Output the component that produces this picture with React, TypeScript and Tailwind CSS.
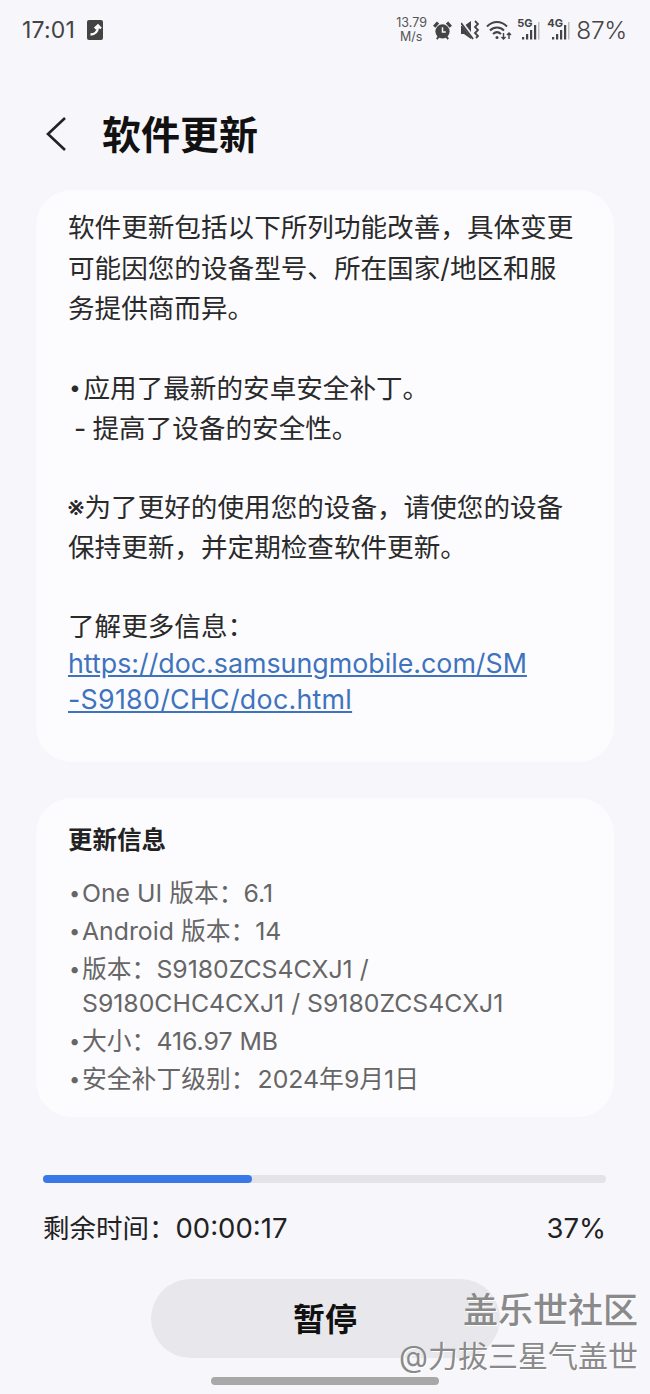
import React from "react";

const font = { fontFamily: '"Inter", "Noto Sans CJK SC", sans-serif' };

function Signal({ label }: { label: string }) {
  return (
    <div className="relative w-[23px] h-[22px]">
      <span className="absolute left-0 top-[-2px] text-[11px] leading-[12px] font-bold text-[#444]">{label}</span>
      <svg className="absolute left-0 top-0" width="23" height="22" viewBox="0 0 23 22" fill="#444">
        <rect x="5" y="18" width="2.200" height="2.500" />
        <rect x="9" y="15" width="2.200" height="5.500" />
        <rect x="13" y="11" width="2.200" height="9.500" />
        <rect x="17" y="6" width="2.200" height="14.500" />
        <rect x="21" y="3" width="1.500" height="17.500" fill="#bbb" />
      </svg>
    </div>
  );
}

function StatusBar() {
  return (
    <div className="h-[60px] pl-[22px] pr-[23px] flex items-center justify-between text-[#444]">
      <div className="flex items-center gap-[12px]">
        <span className="text-[23px] leading-none tracking-[0.2px]">17:01</span>
        <svg width="16" height="20" viewBox="0 0 16 20">
          <rect width="16" height="20" rx="2" fill="#444" />
          <path d="M3.500 14.500c4 0 7-2.500 7.500-7.500M7.800 8.500l3.200-3 3 3" fill="none" stroke="#fff" strokeWidth="2.400" />
        </svg>
      </div>
      <div className="flex items-center">
        <div className="w-[30px] text-center text-[12.500px] leading-[14px] text-[#555]">
          13.79
          <br />
          M/s
        </div>
        {/* alarm clock */}
        <svg className="ml-[7px]" width="19" height="19" viewBox="0 0 20 20" fill="#444">
          <circle cx="10" cy="11" r="7.500" />
          <path d="M0 5l4-4.500 2.500 2-4 4.500zM20 5l-4-4.500-2.500 2 4 4.500z" />
          <path d="M10 6.500v5h3.500" fill="none" stroke="#f6f6fb" strokeWidth="1.600" />
          <path d="M4 19l2-2.500M16 19l-2-2.500" stroke="#444" strokeWidth="2" />
        </svg>
        {/* muted speaker with vibration */}
        <svg className="ml-[9px]" width="18" height="20" viewBox="0 0 18 20" fill="#444">
          <path d="M0 6h3l7-5v18l-7-5H0z" />
          <path d="M0 1.500l12 16" stroke="#f6f6fb" strokeWidth="3.200" />
          <path d="M0 3l12 16" stroke="#444" strokeWidth="1.800" />
          <path d="M14 1l3 3-3 3 3 3-3 3 3 3-2 2" fill="none" stroke="#444" strokeWidth="1.800" />
        </svg>
        {/* wifi with traffic arrows */}
        <svg className="ml-[7px]" width="26" height="20" viewBox="0 0 26 20" fill="none" stroke="#444" strokeWidth="2">
          <path d="M1 6.500c6-6 14-6 20 0M4 10.500c4-4 10-4 14 0M7 14c2.500-2.300 5.500-2.300 8 0" />
          <circle cx="11" cy="17.500" r="1.500" fill="#444" stroke="none" />
          <path d="M17.500 13v6M15.500 17l2 2 2-2M23 19v-6M21 15l2-2 2 2" strokeWidth="1.400" />
        </svg>
        <div className="ml-[5px]"><Signal label="5G" /></div>
        <div className="ml-[7px]"><Signal label="4G" /></div>
        <span className="ml-[6px] text-[24.500px] leading-none tracking-[-0.3px] font-light">87%</span>
      </div>
    </div>
  );
}

function Bullet({ children }: { children: React.ReactNode }) {
  return (
    <div className="flex">
      <span className="w-[14px] shrink-0 text-[20px] pl-[1px]">•</span>
      <span>{children}</span>
    </div>
  );
}

export default function App() {
  return (
    <div className="relative w-[650px] h-[1394px] overflow-hidden bg-[#f6f6fb]" style={font}>
      <StatusBar />

      <div className="mt-[39px] h-[70px] flex items-center pl-[45px] mb-[21px]">
        <svg width="22" height="36" viewBox="0 0 22 36" fill="none" stroke="#222" strokeWidth="2.600">
          <path d="M20 2L3 18l17 16" />
        </svg>
        <h1 className="ml-[35px] text-[39px] leading-none font-bold text-[#111]">软件更新</h1>
      </div>

      <section className="mx-[36px] h-[572px] rounded-[36px] bg-[#fcfcff] pl-[32px] pr-[20px] pt-[17px] text-[26.600px] text-[#2a2a2a]">
        <div className="leading-[40.500px] h-[121px]">
          软件更新包括以下所列功能改善，具体变更
          <br />
          可能因您的设备型号、所在国家/地区和服
          <br />
          务提供商而异。
        </div>
        <div className="leading-[40px] mt-[40px]">
          <div className="flex">
            <span className="w-[15.500px] text-[21px] pl-[1px]">•</span>
            <span>应用了最新的安卓安全补丁。</span>
          </div>
          <div className="flex">
            <span className="w-[24.500px] pl-[6px]">-</span>
            <span>提高了设备的安全性。</span>
          </div>
        </div>
        <div className="leading-[40px] mt-[39px]">
          <div className="flex">
            <span className="w-[16px] text-[28px] ml-[-1px] mr-[1.500px]">※</span>
            <span>为了更好的使用您的设备，请使您的设备</span>
          </div>
          <div>保持更新，并定期检查软件更新。</div>
        </div>
        <div className="leading-[40px] mt-[39px]">了解更多信息：</div>
        <div className="leading-[35.500px] text-[#3f73bd] underline text-[26.800px]">
          https://doc.samsungmobile.com/SM
          <br />
          <span className="tracking-[0.27px]">-S9180/CHC/doc.html</span>
        </div>
      </section>

      <section className="mt-[36px] mx-[36px] h-[319px] rounded-[36px] bg-[#fcfcff] pl-[32px] pr-[30px] pt-[25px]">
        <h2 className="text-[24.500px] leading-[34px] font-semibold text-[#222]">更新信息</h2>
        <div className="mt-[17px] text-[#666] text-[24.800px] leading-[38px]">
          <Bullet>One UI 版本：6.1</Bullet>
          <Bullet>Android 版本：14</Bullet>
          <Bullet>
            <span className="block">版本：S9180ZCS4CXJ1 /</span>
            <span className="block leading-[30px] pb-[4px]">S9180CHC4CXJ1 / S9180ZCS4CXJ1</span>
          </Bullet>
          <Bullet>大小：416.97 MB</Bullet>
          <Bullet>
            安全补丁级别：<span className="ml-[2px]">2024年9月1日</span>
          </Bullet>
        </div>
      </section>

      <div className="mt-[58px] mx-[43px] w-[563px] h-[8px] rounded-full bg-[#e3e3e8]">
        <div className="w-[209px] h-full rounded-full bg-[#3b78e7]" />
      </div>

      <div className="mt-[25px] mx-[43px] w-[563px] flex justify-between items-center text-[27.500px] leading-[40px] text-[#222]">
        <span>
          <span className="text-[26.500px]">剩余时间：</span>00:00:17
        </span>
        <span>37%</span>
      </div>

      <div className="mt-[31px] flex justify-center">
        <button className="w-[349px] h-[79px] pt-[3px] rounded-full bg-[#e8e8ec] text-[32px] font-bold text-[#111]">暂停</button>
      </div>

      <div className="absolute left-[211px] bottom-[9px] w-[228px] h-[8px] rounded-full bg-[#a8a8a8]" />

      {/* channel watermark */}
      <div className="absolute right-[12px] top-[1289px] text-right text-[#8a8a8a]" style={{ textShadow: "1px 1px 0 #fff" }}>
        <div className="text-[35px] leading-[42px] font-medium">盖乐世社区</div>
        <div className="text-[30px] leading-[38px] mt-[6px]">@力拔三星气盖世</div>
      </div>
    </div>
  );
}
